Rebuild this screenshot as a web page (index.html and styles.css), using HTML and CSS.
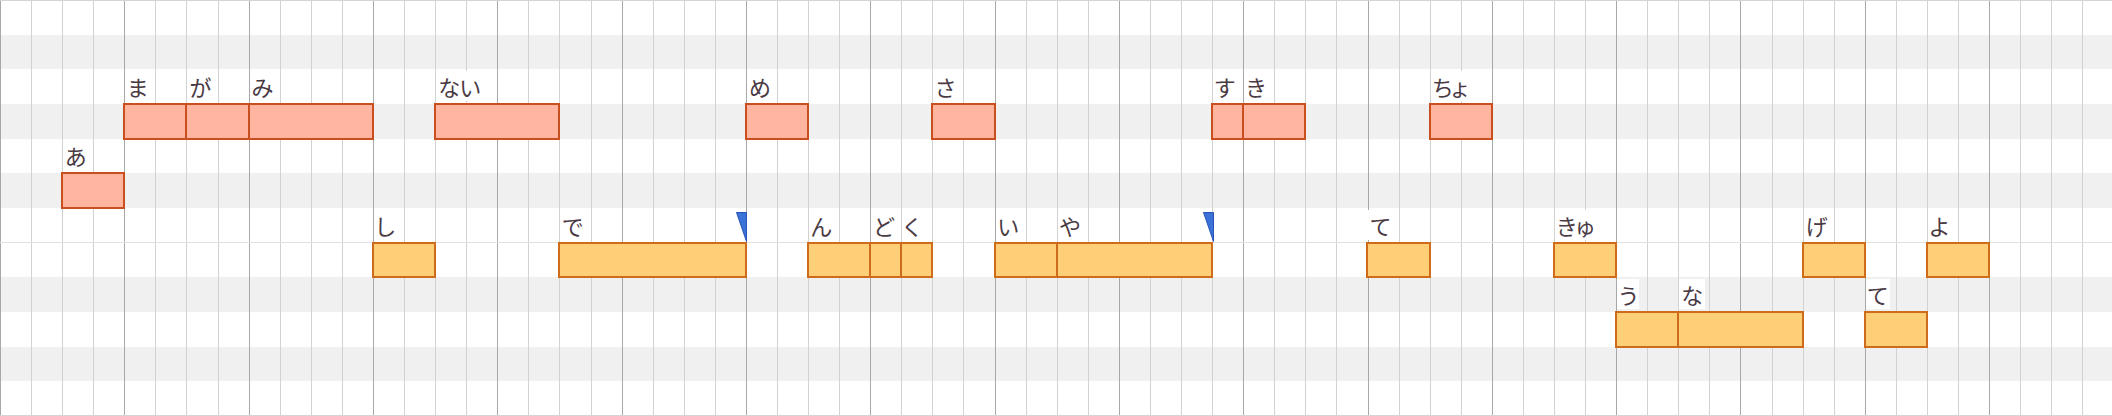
FILE: index.html
```html
<!DOCTYPE html>
<html lang="ja">
<head>
<meta charset="utf-8">
<title>Piano roll</title>
<link rel="stylesheet" href="styles.css">
</head>
<body>
<div class="roll">
  <div class="note pink" style="--r:3;--c:5;--n:2"><div class="head"><span class="lbl">ま</span></div><div class="body"></div></div>
  <div class="note pink" style="--r:3;--c:7;--n:2"><div class="head"><span class="lbl">が</span></div><div class="body"></div></div>
  <div class="note pink" style="--r:3;--c:9;--n:4"><div class="head"><span class="lbl">み</span></div><div class="body"></div></div>
  <div class="note pink" style="--r:3;--c:15;--n:4"><div class="head"><span class="lbl">ない</span></div><div class="body"></div></div>
  <div class="note pink" style="--r:3;--c:25;--n:2"><div class="head"><span class="lbl">め</span></div><div class="body"></div></div>
  <div class="note pink" style="--r:3;--c:31;--n:2"><div class="head"><span class="lbl">さ</span></div><div class="body"></div></div>
  <div class="note pink" style="--r:3;--c:40;--n:1"><div class="head"><span class="lbl">す</span></div><div class="body"></div></div>
  <div class="note pink" style="--r:3;--c:41;--n:2"><div class="head"><span class="lbl">き</span></div><div class="body"></div></div>
  <div class="note pink" style="--r:3;--c:47;--n:2"><div class="head"><span class="lbl">ちょ</span></div><div class="body"></div></div>

  <div class="note pink" style="--r:5;--c:3;--n:2"><div class="head"><span class="lbl">あ</span></div><div class="body"></div></div>

  <div class="note gold" style="--r:7;--c:13;--n:2"><div class="head"><span class="lbl">し</span></div><div class="body"></div></div>
  <div class="note gold" style="--r:7;--c:19;--n:6"><div class="head"><span class="lbl">で</span><svg class="mark" width="11" height="30" viewBox="0 0 11 30"><polygon points="0.5,0.5 10.5,0.5 10.5,29.5" /></svg></div><div class="body"></div></div>
  <div class="note gold" style="--r:7;--c:27;--n:2"><div class="head"><span class="lbl">ん</span></div><div class="body"></div></div>
  <div class="note gold" style="--r:7;--c:29;--n:1"><div class="head"><span class="lbl">ど</span></div><div class="body"></div></div>
  <div class="note gold" style="--r:7;--c:30;--n:1"><div class="head"><span class="lbl">く</span></div><div class="body"></div></div>
  <div class="note gold" style="--r:7;--c:33;--n:2"><div class="head"><span class="lbl">い</span></div><div class="body"></div></div>
  <div class="note gold" style="--r:7;--c:35;--n:5"><div class="head"><span class="lbl">や</span><svg class="mark" width="11" height="30" viewBox="0 0 11 30"><polygon points="0.5,0.5 10.5,0.5 10.5,29.5" /></svg></div><div class="body"></div></div>
  <div class="note gold" style="--r:7;--c:45;--n:2"><div class="head"><span class="lbl">て</span></div><div class="body"></div></div>
  <div class="note gold" style="--r:7;--c:51;--n:2"><div class="head"><span class="lbl">きゅ</span></div><div class="body"></div></div>
  <div class="note gold" style="--r:7;--c:59;--n:2"><div class="head"><span class="lbl">げ</span></div><div class="body"></div></div>
  <div class="note gold" style="--r:7;--c:63;--n:2"><div class="head"><span class="lbl">よ</span></div><div class="body"></div></div>

  <div class="note gold" style="--r:9;--c:53;--n:2"><div class="head"><span class="lbl">う</span></div><div class="body"></div></div>
  <div class="note gold" style="--r:9;--c:55;--n:4"><div class="head"><span class="lbl">な</span></div><div class="body"></div></div>
  <div class="note gold" style="--r:9;--c:61;--n:2"><div class="head"><span class="lbl">て</span></div><div class="body"></div></div>
</div>
</body>
</html>
```

FILE: styles.css
```css
html, body {
  margin: 0;
  padding: 0;
  background: #ffffff;
}

body {
  width: 2112px;
  height: 416px;
  overflow: hidden;
  font-family: "Noto Sans CJK JP", "Noto Sans", sans-serif;
}

.roll {
  width: 2112px;
  height: 416px;
  overflow: hidden;
  display: grid;
  grid-template-columns: repeat(68, 31.08px);
  grid-template-rows: repeat(12, 34.6667px);
  background-image:
    linear-gradient(to bottom, #d4d4d4 0 1px, transparent 1px 242.17px, #e2e2e2 242.17px 243.17px, transparent 243.17px 415px, #d4d4d4 415px),
    repeating-linear-gradient(to right, #a8a8a8 0 1px, transparent 1px 124.32px),
    repeating-linear-gradient(to right, #d2d2d2 0 1px, transparent 1px 31.08px),
    linear-gradient(to bottom,
      #ffffff 0 34.667px,
      #f0f0f0 34.667px 69.333px,
      #ffffff 69.333px 104px,
      #f0f0f0 104px 138.667px,
      #ffffff 138.667px 173.333px,
      #f0f0f0 173.333px 208px,
      #ffffff 208px 277.333px,
      #f0f0f0 277.333px 312px,
      #ffffff 312px 346.667px,
      #f0f0f0 346.667px 381.333px,
      #ffffff 381.333px);
}

.note {
  grid-row: var(--r) / span 2;
  grid-column: var(--c) / span var(--n);
  display: grid;
  grid-template-rows: 1fr 1fr;
  min-width: 0;
}

.head {
  display: flex;
  align-items: flex-end;
  justify-content: space-between;
  padding-bottom: 3px;
  min-width: 0;
}

.lbl {
  margin-left: 1px;
  padding: 0 2px;
  height: 30px;
  line-height: 30px;
  font-size: 22px;
  font-feature-settings: "palt";
  color: #4a3a44;
  background: #ffffff;
  white-space: nowrap;
}

.mark {
  display: block;
  margin-right: -1.5px;
  margin-bottom: -2px;
  flex: none;
}

.mark polygon {
  fill: #3b72d8;
  stroke: #2a55b8;
  stroke-width: 1;
}

.body {
  margin: -1px;
  border: 2px solid;
  box-sizing: border-box;
}

.pink .body {
  background: #ffb5a0;
  border-color: #c9501e;
}

.gold .body {
  background: #ffcf78;
  border-color: #cf6c1c;
}
```
